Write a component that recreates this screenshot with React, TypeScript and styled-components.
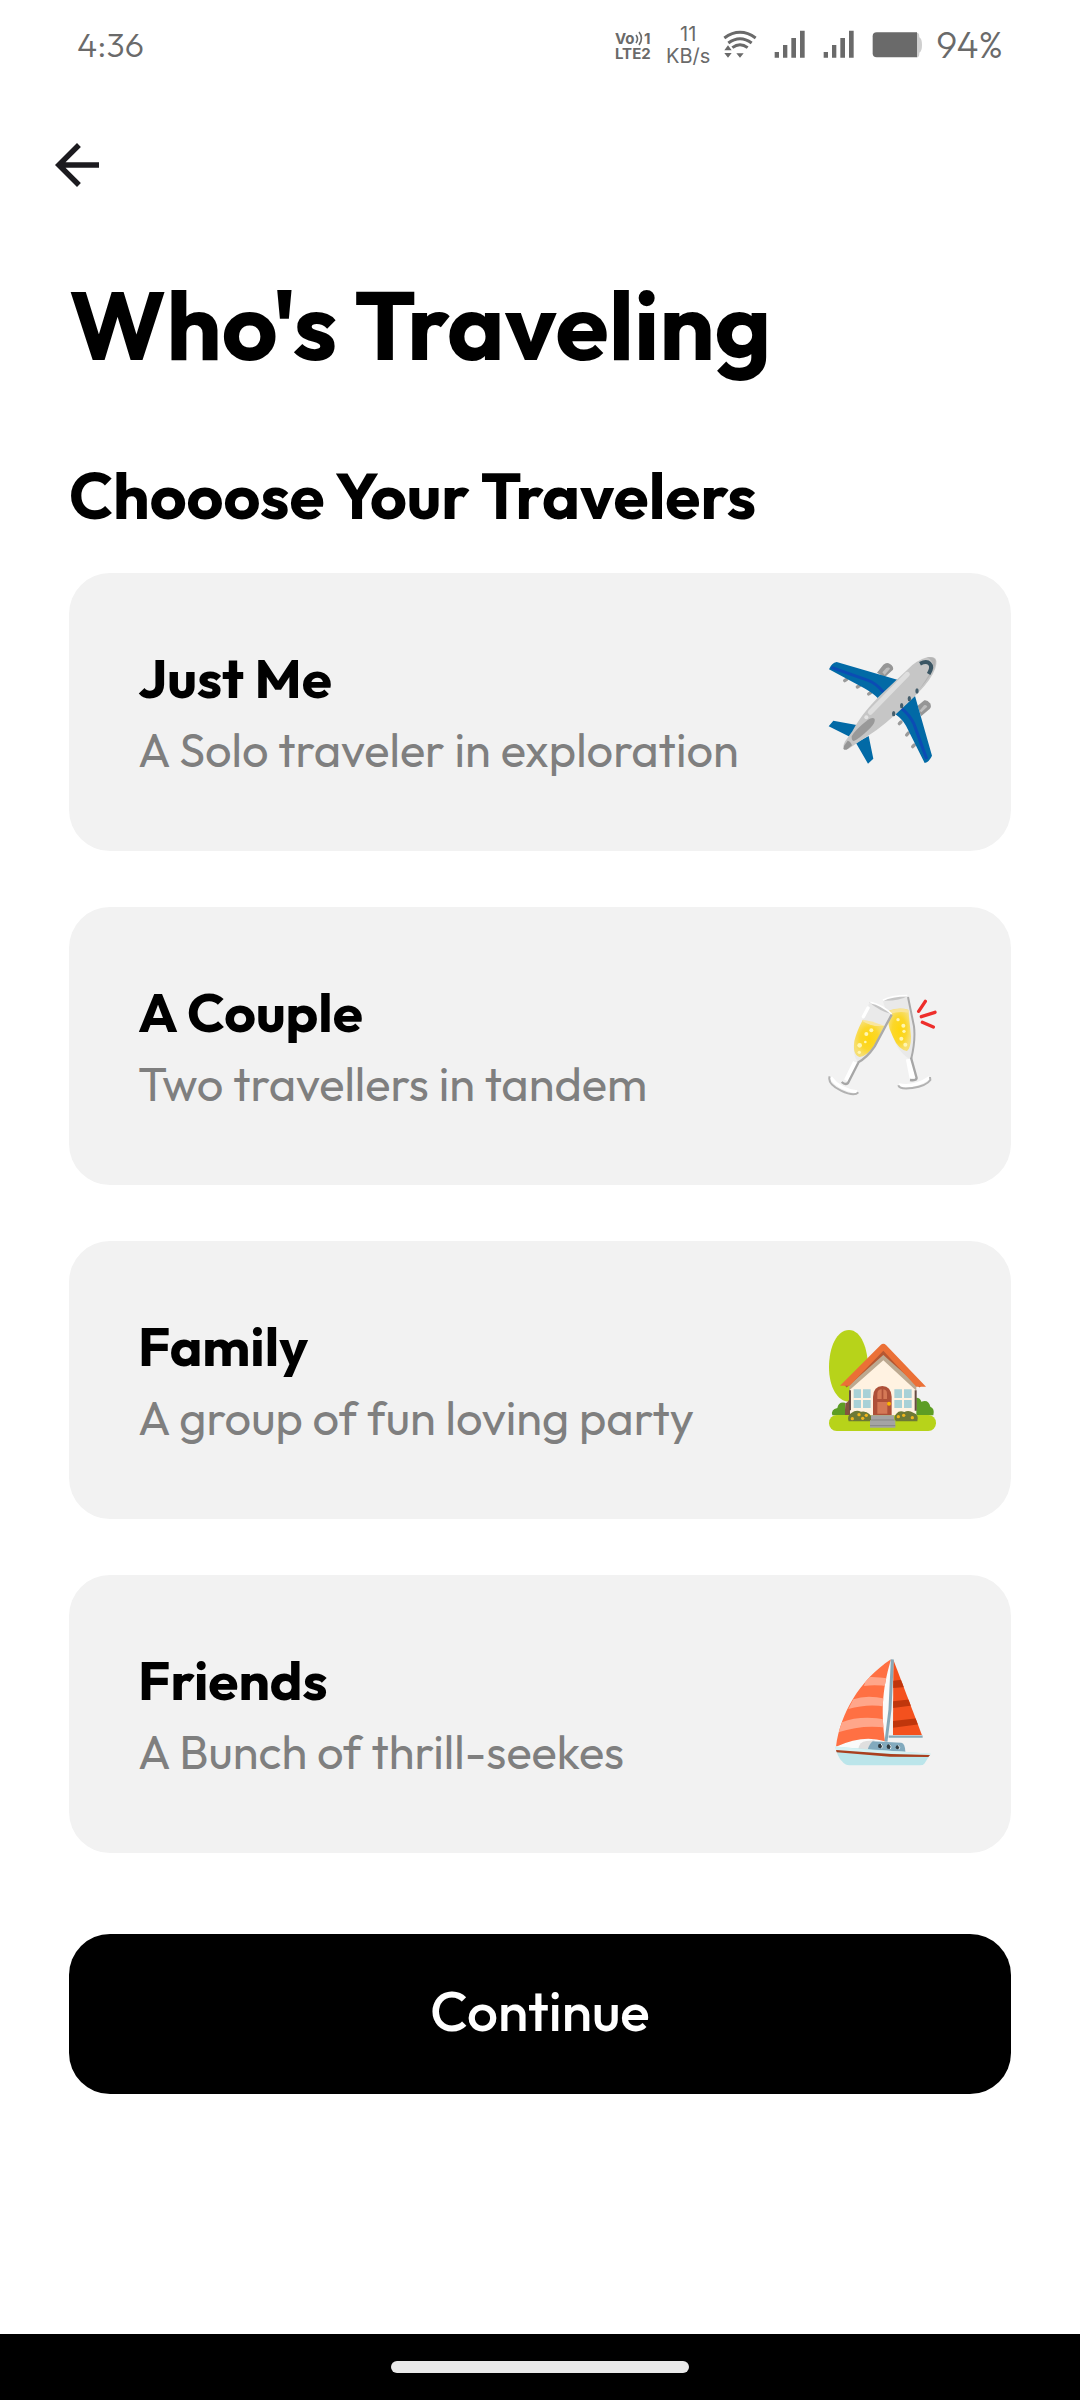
import React, { useState } from "react";
import styled, { createGlobalStyle } from "styled-components";

const GlobalStyle = createGlobalStyle`
  *, *::before, *::after { box-sizing: border-box; }
  body {
    margin: 0;
    background: #fff;
    color: #000;
    font-family: Outfit, Lato, "Open Sans", sans-serif;
  }
  button { font-family: inherit; }
`;

const Screen = styled.div`
  min-height: 100vh;
  display: flex;
  flex-direction: column;
`;

const StatusBar = styled.div`
  display: flex;
  align-items: center;
  justify-content: space-between;
  height: 90px;
  padding: 0 77px;
  color: #6a6a6a;
`;

const StatusText = styled.span<{ $size: number }>`
  font-size: ${({ $size }) => $size}px;
  line-height: 40px;
  font-weight: 300;
`;

const StatusGroup = styled.div`
  display: flex;
  align-items: center;
  gap: 13px;
`;

const StatusIcons = styled.div`
  display: flex;
  align-items: center;
  gap: 17px;
`;

const Speed = styled.div`
  display: flex;
  flex-direction: column;
  align-items: center;
  font-family: Inter, sans-serif;
  font-size: 20px;
  line-height: 22px;
`;

const Header = styled.header`
  padding: 42px 44px 0;
`;

const BackButton = styled.button`
  display: block;
  padding: 0;
  border: 0;
  background: none;
  color: #1c1b1f;
  line-height: 0;
`;

const Main = styled.main`
  flex: 1;
  display: flex;
  flex-direction: column;
  padding: 64px 69px 0;
`;

const Title = styled.h1`
  margin: 0;
  font-size: 97px;
  line-height: 124px;
  font-weight: 700;
`;

const Subtitle = styled.h2`
  margin: 70px 0 37px;
  font-size: 64px;
  line-height: 80px;
  font-weight: 700;
`;

const Options = styled.div`
  display: flex;
  flex-direction: column;
  gap: 56px;
`;

const Card = styled.button`
  display: flex;
  align-items: center;
  justify-content: space-between;
  min-height: 278px;
  padding: 0 70px 0 69px;
  border: 0;
  border-radius: 41px;
  background: #f2f2f2;
  color: #000;
  text-align: left;
`;

const CardText = styled.span`
  display: flex;
  flex-direction: column;
  padding-top: 2px;
`;

const CardTitle = styled.span`
  font-size: 55px;
  line-height: 74px;
  font-weight: 700;
`;

const CardDetail = styled.span`
  font-size: 47px;
  line-height: 70px;
  color: #7f7f7f;
`;

const ContinueButton = styled.button`
  min-height: 160px;
  margin-top: 81px;
  padding: 0 0 8px;
  border: 0;
  border-radius: 41px;
  background: #000;
  color: #fff;
  font-size: 55px;
  font-weight: 500;
`;

const NavBar = styled.div`
  display: flex;
  align-items: center;
  justify-content: center;
  height: 66px;
  background: #000;
`;

const Handle = styled.div`
  width: 298px;
  height: 12px;
  border-radius: 6px;
  background: #e9e9e9;
`;

const VoLteIcon = () => (
  <svg width="38" height="34" viewBox="0 0 38 34" fill="currentColor" fontFamily="Inter, sans-serif" fontWeight="700" fontSize="15">
    <text x="0" y="16">Vo</text>
    <path d="M21 7q3 4 0 8M24 4q5 6 0 13" fill="none" stroke="currentColor" strokeWidth="1.600" />
    <text x="29" y="16">1</text>
    <text x="0" y="31">LTE2</text>
  </svg>
);

const WifiIcon = () => (
  <svg width="34" height="30" viewBox="0 0 102 90" fill="none" stroke="currentColor" strokeWidth="9">
    <path d="M4 24Q51 -10 98 24M16 39Q51 13 86 39M28 53Q51 36 74 53" />
    <path d="M40 70h22l-11 13zM4 61h22l-11-15zM4 69h22l-11 14z" fill="currentColor" stroke="none" />
  </svg>
);

const SignalIcon = () => (
  <svg width="32" height="30" viewBox="0 0 96 90" fill="currentColor">
    <path d="M2 66h13v17H2zM27 45h13v38H27zM52 24h14v59H52zM78 2h14v81H78z" />
  </svg>
);

const BatteryIcon = () => (
  <svg width="51" height="26" viewBox="0 0 153 78">
    <path d="M134 2c6 0 8 4 8 14q8 4 8 23t-8 23c0 10-2 14-8 14z" fill="#cfcfcf" />
    <path d="M14 1h121v75H14Q2 76 2 64V13Q2 1 14 1z" fill="currentColor" />
  </svg>
);

const BackIcon = () => (
  <svg width="66" height="66" viewBox="0 0 24 24" fill="currentColor">
    <path d="M20 11H7.830l5.590-5.590L12 4l-8 8 8 8 1.410-1.410L7.830 13H20v-2z" />
  </svg>
);

const Plane = () => (
  <svg width="114" height="114" viewBox="51 45 342 342">
    <g stroke="#9b9b9b" strokeWidth="10" strokeLinecap="round">
      <path d="M104 122l6-4M142 141l7-4M176 162l7-5M268 251l5-5M290 285l5-6M308 320l5-5" />
    </g>
    <path d="M201 98l19-24q10-9 20-2 12 8 9 17l-25 23z" fill="#969696" />
    <path d="M217 97l12-13q8-4 11 2l-16 19z" fill="#bdbdbd" />
    <path d="M323 197l20-16q9-2 17 9 6 10-1 17l-26 22z" fill="#969696" />
    <path d="M329 212l13-16q7-3 10 4l-18 17z" fill="#bdbdbd" />
    <path d="M57 88q8-20 23-22L262 119 207 178q-16-17-44-33z" fill="#026aa6" />
    <path d="M64 82l110 39q22 7 46 35" fill="none" stroke="#0c4cb4" strokeWidth="9" />
    <path d="M255 222L315 168 366 347q-8 18-22 22L288 257q-11-20-33-35z" fill="#026aa6" />
    <path d="M274 205q26 20 38 47l38 105" fill="none" stroke="#0c4cb4" strokeWidth="9" />
    <path d="M56 259l14-17 82 15-30 35zM138 309l38-21 14 68-16 15z" fill="#026aa6" />
    <path d="M127 274C153 225 180 198 206 170L307 75q38-29 63-23 15 5 6 33-11 32-50 72-74 75-127 114l-81 54q-13 7-17-4-2-6 5-18z" fill="#c6c6c6" />
    <path d="M350 52q25-3 27 10-1 32-50 87 35-48 41-72 1-17-18-25z" fill="#b4b4b4" />
    <path d="M102 318l11-16q8 1 13 14l-14 12q-8 4-12-2z" fill="#969696" />
    <path d="M125 289q8-18 49-50 14-9 20-2 3 10-13 27-35 34-50 39-7-2-6-14z" fill="#999" />
    <path d="M181 217L292 103" stroke="#dedede" strokeWidth="15" strokeLinecap="round" />
    <circle cx="169" cy="232" r="6" fill="#e4e4e4" />
    <path d="M330 71q20-10 29 0 10 10-3 31" fill="none" stroke="#3b5664" strokeWidth="12" />
    <g fill="#455e6c">
      <ellipse cx="321" cy="153" rx="5" ry="8" /><ellipse cx="298" cy="176" rx="5" ry="8" /><ellipse cx="275" cy="197" rx="5" ry="8" /><ellipse cx="251" cy="221" rx="5" ry="8" />
    </g>
  </svg>
);

const Glasses = () => (
  <svg width="114" height="114" viewBox="51 27 342 342">
    <defs>
      <radialGradient id="champagne">
        <stop offset="0" stopColor="#ffd60d" /><stop offset="0.600" stopColor="#fbd72b" /><stop offset="1" stopColor="#f7df72" />
      </radialGradient>
    </defs>
    <path d="M219 63q35-21 74-16l19 90q7 45-8 94l-7 5q-43-28-56-96z" fill="#e9e9e9" />
    <path d="M239 91q28-10 56-2l8 80q0 35-12 44-26-4-42-42-13-25-16-50z" fill="url(#champagne)" />
    <path d="M238 92q30-10 57-2l1 8q-30-5-54 3z" fill="#f9e497" />
    <path d="M219 62q22-15 74-14-23 15-74 14z" fill="#c7c7c7" />
    <path d="M219 61q24-14 73-14" fill="none" stroke="#fff" strokeWidth="5" />
    <path d="M294 51l18 88q5 40-8 96" fill="none" stroke="#aaa" strokeWidth="6" />
    <path d="M296 237l11 57" stroke="#fff" strokeWidth="17" />
    <path d="M303 233l17 61q-1 9-20 6" fill="none" stroke="#a6a6a6" strokeWidth="7" />
    <path d="M266 315q45 10 93-22" fill="none" stroke="#fff" strokeWidth="10" />
    <path d="M265 316q3 13 42 8 42-6 54-24l-1-9" fill="none" stroke="#b2b2b2" strokeWidth="6" />
    <path d="M178 68l67 34-43 88q-22 46-55 56-19-11-15-57z" fill="#eaeaea" />
    <path d="M158 120q29 22 65 17l-24 49q-24 42-50 45-22-6-16-48 7-29 25-63z" fill="url(#champagne)" />
    <path d="M158 119q22 2 65 18-37 5-65-13z" fill="#f9e6a0" />
    <path d="M177 67q37 4 69 36-35-8-69-36z" fill="#c5c5c5" />
    <path d="M181 67q34 7 64 35" fill="none" stroke="#fff" strokeWidth="5" />
    <path d="M174 84l-14 26" stroke="#fff" strokeWidth="10" strokeLinecap="round" />
    <path d="M245 104l-51 95q-24 35-51 49" fill="none" stroke="#aaa" strokeWidth="7" />
    <path d="M137 247l-27 55" stroke="#fff" strokeWidth="17" />
    <path d="M145 248l-31 61q-8 7-19-3" fill="none" stroke="#a6a6a6" strokeWidth="7" />
    <path d="M62 292q24 35 79 44" fill="none" stroke="#fff" strokeWidth="10" />
    <path d="M59 289q-8 22 34 43 40 19 52 5" fill="none" stroke="#b2b2b2" strokeWidth="6" />
    <g fill="#fff6b2">
      <circle cx="184" cy="151" r="6" /><circle cx="169" cy="162" r="6" /><circle cx="166" cy="186" r="4" /><circle cx="149" cy="196" r="7" /><circle cx="148" cy="217" r="5" />
      <circle cx="264" cy="119" r="5" /><circle cx="280" cy="137" r="6" /><circle cx="282" cy="154" r="5" /><circle cx="274" cy="176" r="6" /><circle cx="286" cy="194" r="6" />
    </g>
    <path d="M326 94l20-30M334 110l41-13M337 127l33 14" stroke="#ee2e2b" strokeWidth="10" strokeLinecap="round" />
  </svg>
);

const House = () => (
  <svg width="114" height="114" viewBox="51 39 342 342">
    <path d="M117 60c37 0 57 58 57 112s-23 103-57 103-60-43-60-103 23-112 60-112z" fill="#b7d31a" />
    <path d="M106 279q9 0 14-19v60h-16z" fill="#83533f" />
    <path d="M67 316q-5-18 15-22 3-20 23-16v38zM319 263q12 0 15 12 22-8 27 15 14 5 9 26h-51z" fill="#5d9d24" />
    <rect x="57" y="315" width="321" height="48" rx="23" fill="#b7d31a" />
    <path d="M120 226L219 137l99 89v90H120z" fill="#fff2e1" />
    <path d="M120 241v60M317 241v61" stroke="#664c43" strokeWidth="6" />
    <path d="M118 241v-17L220 132l99 92v18L220 151z" fill="#bca990" />
    <path d="M106 228L220 127l113 101" fill="none" stroke="#b65731" strokeWidth="12" />
    <path d="M90 227L212 105q8-7 16 0L348 230h-29L220 122 119 227z" fill="#eb7036" />
    <path d="M189 316v-56q2-32 28-32t28 32v56z" fill="#ae5038" />
    <path d="M202 311v-35h30v35zM202 267v-17q1-12 13-12v29zM220 238q11 1 11 13v16h-11z" fill="#d47856" />
    <circle cx="237" cy="281" r="6" fill="#fbb500" />
    <path d="M131 238h51v56h-51zM253 238h52v56h-52z" fill="#a8d1d7" />
    <path d="M156 237v58M279 237v58M130 267h53M252 267h54" stroke="#fff2e1" strokeWidth="6" />
    <path d="M116 334q-6-17 8-25 14-11 29-4 16-3 25 7 11 11 3 22zM257 334q-8-13 2-23 9-11 24-5 13-7 27 2 18 6 12 26z" fill="#6d7935" />
    <g fill="#f0b51c"><circle cx="127" cy="326" r="5" /><circle cx="147" cy="314" r="5" /><circle cx="158" cy="325" r="5" /><circle cx="169" cy="316" r="5" /><circle cx="265" cy="320" r="5" /><circle cx="281" cy="316" r="5" /><circle cx="307" cy="323" r="5" /></g>
    <path d="M183 316h69v15h4v22h-76v-22h3z" fill="#a4a4a4" />
    <path d="M183 330h71M180 347h76" stroke="#858585" strokeWidth="3" />
  </svg>
);

const Sailboat = () => (
  <svg width="114" height="114" viewBox="51 51 342 342">
    <defs>
      <clipPath id="mainSail"><path d="M243 58C213 158 215 226 225 304q-65-22-147 16C91 221 148 121 243 58z" /></clipPath>
      <clipPath id="jib"><path d="M250 59l86 227h-87z" /></clipPath>
    </defs>
    <path d="M225 304q-65-20-147 15v7l151 2z" fill="#fafafa" />
    <path d="M243 61q-41 125-18 240h9l12-239z" fill="#fafafa" />
    <g clipPath="url(#mainSail)">
      <path d="M70 50h180v280H70z" fill="#ff7043" />
      <path d="M170 112q25-3 70 5v23q-42-7-78-2zM130 178q39-15 96-2v24q-52-10-111 7zM96 247q55-22 134-8v24q-75-10-145 14z" fill="#ffa68a" />
    </g>
    <g clipPath="url(#jib)">
      <path d="M248 50h90v240h-90z" fill="#f4511e" />
      <path d="M248 122l40-4v23l-40 3zM248 184l70-8v19l-70 9zM248 243l80-9v19l-80 10z" fill="#bf360c" />
    </g>
    <path d="M247 58l-7 150-12 97" fill="none" stroke="#86a8b7" strokeWidth="9" />
    <path d="M236 290h102" stroke="#86a8b7" strokeWidth="7" />
    <path d="M145 327q3-22 24-24l25-2-8 29z" fill="#dfdfdf" />
    <path d="M173 329q5-17 15-25l86 4q11 1 12 27z" fill="#82aabe" />
    <g fill="#303c42"><circle cx="211" cy="318" r="7" /><circle cx="237" cy="320" r="7" /><circle cx="263" cy="322" r="6" /></g>
    <path d="M213 311q8 8 2 14M239 313q8 8 2 14M265 316q7 6 2 12" fill="none" stroke="#e9f4f7" strokeWidth="3" />
    <path d="M76 320l286 21-19 30q-3 5-14 5H118q-13 0-22-12-15-16-20-44z" fill="#bbe5ea" />
    <path d="M76 319q70 10 170 14l117 8-6 6-279-15z" fill="#d7f1f3" />
    <path d="M78 330l165 12 117 3-5 6-115-1-160-13z" fill="#a9401f" />
  </svg>
);

const options = [
  { title: "Just Me", detail: "A Solo traveler in exploration", Picture: Plane },
  { title: "A Couple", detail: "Two travellers in tandem", Picture: Glasses },
  { title: "Family", detail: "A group of fun loving party", Picture: House },
  { title: "Friends", detail: "A Bunch of thrill-seekes", Picture: Sailboat },
];

export default function App() {
  const [selected, setSelected] = useState<string | null>(null);
  return (
    <Screen>
      <GlobalStyle />
      <StatusBar>
        <StatusText $size={34}>4:36</StatusText>
        <StatusGroup>
          <VoLteIcon />
          <Speed>
            <span>11</span>
            <span>KB/s</span>
          </Speed>
          <StatusIcons>
            <WifiIcon />
            <SignalIcon />
            <SignalIcon />
            <BatteryIcon />
          </StatusIcons>
          <StatusText $size={37}>94%</StatusText>
        </StatusGroup>
      </StatusBar>
      <Header>
        <BackButton type="button" aria-label="Back">
          <BackIcon />
        </BackButton>
      </Header>
      <Main>
        <Title>Who's Traveling</Title>
        <Subtitle>Chooose Your Travelers</Subtitle>
        <Options>
          {options.map(({ title, detail, Picture }) => (
            <Card key={title} type="button" aria-pressed={selected === title} onClick={() => setSelected(title)}>
              <CardText>
                <CardTitle>{title}</CardTitle>
                <CardDetail>{detail}</CardDetail>
              </CardText>
              <Picture />
            </Card>
          ))}
        </Options>
        <ContinueButton type="button">Continue</ContinueButton>
      </Main>
      <NavBar>
        <Handle />
      </NavBar>
    </Screen>
  );
}
